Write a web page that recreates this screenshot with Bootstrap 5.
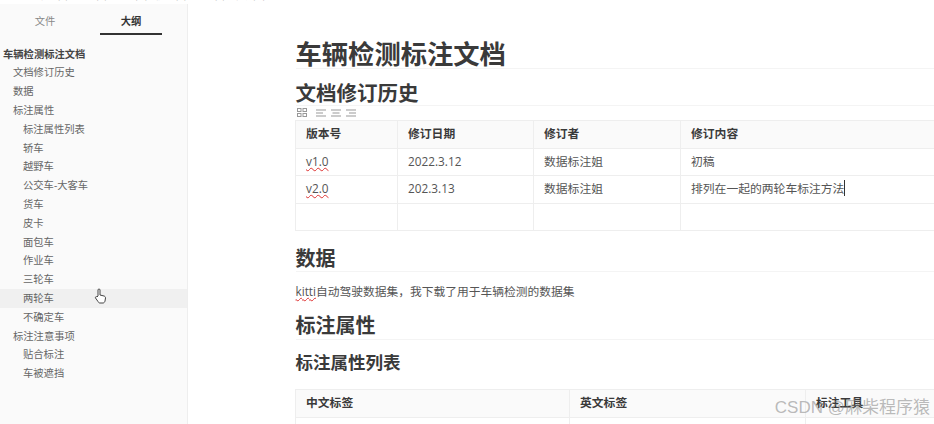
<!DOCTYPE html>
<html lang="zh">
<head>
<meta charset="utf-8">
<link href="https://cdn.jsdelivr.net/npm/bootstrap@5.3.0/dist/css/bootstrap.min.css" rel="stylesheet">
<style>
html,body{height:100%;overflow:hidden;background:#fff}
body{font-family:"Open Sans","Noto Sans CJK SC",sans-serif;color:#333;width:934px;height:424px}
.shell{height:424px}
.menu-strip{height:4px;flex:none;overflow:hidden;padding-left:7px;gap:7px;font-size:10px;line-height:14px;color:#999}
.menu-strip span{margin-top:-12px;white-space:nowrap;display:block}
.menu-strip span:first-child{margin-right:3px}
.body-row{flex:1;min-height:0}
.side{width:188px;flex:none;background:#fafafa;border-right:1px solid #eeeeee;position:relative}
.tabs{padding-left:14px;gap:24px;height:31px}
.tabitem{width:62px;text-align:center;font-size:10.3px;color:#888;line-height:14px;padding-top:10px;height:31px}
.tabitem.on{color:#333;font-weight:700;border-bottom:2px solid #333}
.outline{margin-top:9.6px;font-size:10.3px;color:#666}
.outline div{height:18.8px;line-height:18.8px;white-space:nowrap}
.lv1{padding-left:3px;font-weight:700;color:#444}
.lv2{padding-left:13px}
.lv3{padding-left:23px}
.hov{background:#f0f0f0}
.hand{position:absolute;left:94px;top:284px}
.main{flex:1;padding:0 0 0 107.5px;overflow:hidden}
.ttl{font-size:26.3px;font-weight:700;line-height:28px;margin:36px 0 0;padding:0;border-bottom:1px solid #f4f4f4;color:#3a3a3a;width:700px}
.h-a{font-size:20.5px;font-weight:700;line-height:24px;margin:12px 0 0;color:#3a3a3a;border-bottom:1px solid #f4f4f4;width:700px}
.tools{height:13px;margin-top:0;padding-left:1px;gap:5px;margin-bottom:1px}
.tools svg{display:block}
.tools .grid-ic{margin-right:4px}
.doc-t{border-collapse:collapse;font-size:11.8px;table-layout:fixed;color:#555;margin:0 0 0 -1px}
.doc-t th,.doc-t td{border:1px solid #eeeeee;padding:0 0 0 10.500px;height:27.5px;vertical-align:middle;font-weight:400}
.doc-t th{background:#fafafa;font-weight:700;color:#3a3a3a}
.doc-t tr>*:last-child{border-right:0}
.t-one{width:640px}
.t-two{width:640px;margin-top:15px}
.para{font-size:11.75px;line-height:16px;margin:11px 0 0;color:#555}
.h-b{font-size:20px;font-weight:700;line-height:24px;margin:16px 0 0;color:#3a3a3a;border-bottom:1px solid #f4f4f4;width:700px}
.h-b.next{line-height:26px;margin-top:14px}
.h-c{font-size:17.5px;font-weight:700;line-height:24px;margin:10px 0 0;color:#3a3a3a}
.wavy{text-decoration:underline wavy #d33;text-decoration-thickness:1px;text-underline-offset:1px}
.caret-at{border-right:1px solid #333}
.mark-c{position:absolute;right:4px;bottom:4px;font-size:17px;line-height:24px;color:rgba(130,130,130,.55);font-family:"Liberation Sans","Noto Sans CJK SC",sans-serif;white-space:nowrap}
</style>
</head>
<body>
<div class="d-flex flex-column shell position-relative">
  <div class="d-flex menu-strip">
    <span>文件</span><span>编辑(E)</span><span>段落(P)</span><span>格式(O)</span><span>视图(V)</span><span>主题(T)</span><span>帮助(H)</span>
  </div>
  <div class="d-flex body-row">
  <aside class="side">
    <div class="d-flex tabs">
      <div class="tabitem">文件</div>
      <div class="tabitem on">大纲</div>
    </div>
    <div class="outline">
      <div class="lv1">车辆检测标注文档</div>
      <div class="lv2">文档修订历史</div>
      <div class="lv2">数据</div>
      <div class="lv2">标注属性</div>
      <div class="lv3">标注属性列表</div>
      <div class="lv3">轿车</div>
      <div class="lv3">越野车</div>
      <div class="lv3">公交车-大客车</div>
      <div class="lv3">货车</div>
      <div class="lv3">皮卡</div>
      <div class="lv3">面包车</div>
      <div class="lv3">作业车</div>
      <div class="lv3">三轮车</div>
      <div class="lv3 hov">两轮车</div>
      <div class="lv3">不确定车</div>
      <div class="lv2">标注注意事项</div>
      <div class="lv3">贴合标注</div>
      <div class="lv3">车被遮挡</div>
    </div>
    <svg class="hand" width="13" height="16" viewBox="0 0 13 16" fill="#fff" stroke="#444" stroke-width="1"><path d="M4 8V2a1 1 0 0 1 2 0v5l4 1c1 .3 1.500 1 1.500 2l-.5 3c-.2 1-1 2-2 2H6c-1 0-1.500-.5-2-1.500L1.500 10c-.5-1 .8-2 1.500-1z"/></svg>
  </aside>
  <main class="main">
    <h1 class="ttl">车辆检测标注文档</h1>
    <h2 class="h-a">文档修订历史</h2>
    <div class="d-flex tools align-items-center">
      <svg class="grid-ic" width="10" height="9" viewBox="0 0 10 9" fill="none" stroke="#999" stroke-width="1"><rect x=".5" y=".5" width="3.500" height="3"/><rect x="6" y=".5" width="3.500" height="3"/><rect x=".5" y="5.500" width="3.500" height="3"/><rect x="6" y="5.500" width="3.500" height="3"/></svg>
      <svg width="10" height="8" viewBox="0 0 10 8" stroke="#999" stroke-width="1"><path d="M0 1h10M0 4h7M0 7h10"/></svg>
      <svg width="10" height="8" viewBox="0 0 10 8" stroke="#999" stroke-width="1"><path d="M0 1h10M1.500 4h7M0 7h10"/></svg>
      <svg width="10" height="8" viewBox="0 0 10 8" stroke="#999" stroke-width="1"><path d="M0 1h10M3 4h7M0 7h10"/></svg>
    </div>
    <table class="doc-t t-one">
      <colgroup><col style="width:102px"><col style="width:136px"><col style="width:147px"><col style="width:255px"></colgroup>
      <tr><th>版本号</th><th>修订日期</th><th>修订者</th><th>修订内容</th></tr>
      <tr><td><span class="wavy">v1.0</span></td><td>2022.3.12</td><td>数据标注姐</td><td>初稿</td></tr>
      <tr><td><span class="wavy">v2.0</span></td><td>202.3.13</td><td>数据标注姐</td><td><span class="caret-at">排列在一起的两轮车标注方法</span></td></tr>
      <tr><td></td><td></td><td></td><td></td></tr>
    </table>
    <h2 class="h-b">数据</h2>
    <p class="para"><span class="wavy">kitti</span>自动驾驶数据集，我下载了用于车辆检测的数据集</p>
    <h2 class="h-b next">标注属性</h2>
    <h3 class="h-c">标注属性列表</h3>
    <table class="doc-t t-two">
      <colgroup><col style="width:274px"><col style="width:236px"><col style="width:130px"></colgroup>
      <tr><th>中文标签</th><th>英文标签</th><th>标注工具</th></tr>
      <tr><td></td><td></td><td></td></tr>
    </table>
  </main>
  </div>
  <div class="mark-c">CSDN @麻柴程序猿</div>
</div>
<script src="https://cdn.jsdelivr.net/npm/bootstrap@5.3.0/dist/js/bootstrap.bundle.min.js"></script>
</body>
</html>
